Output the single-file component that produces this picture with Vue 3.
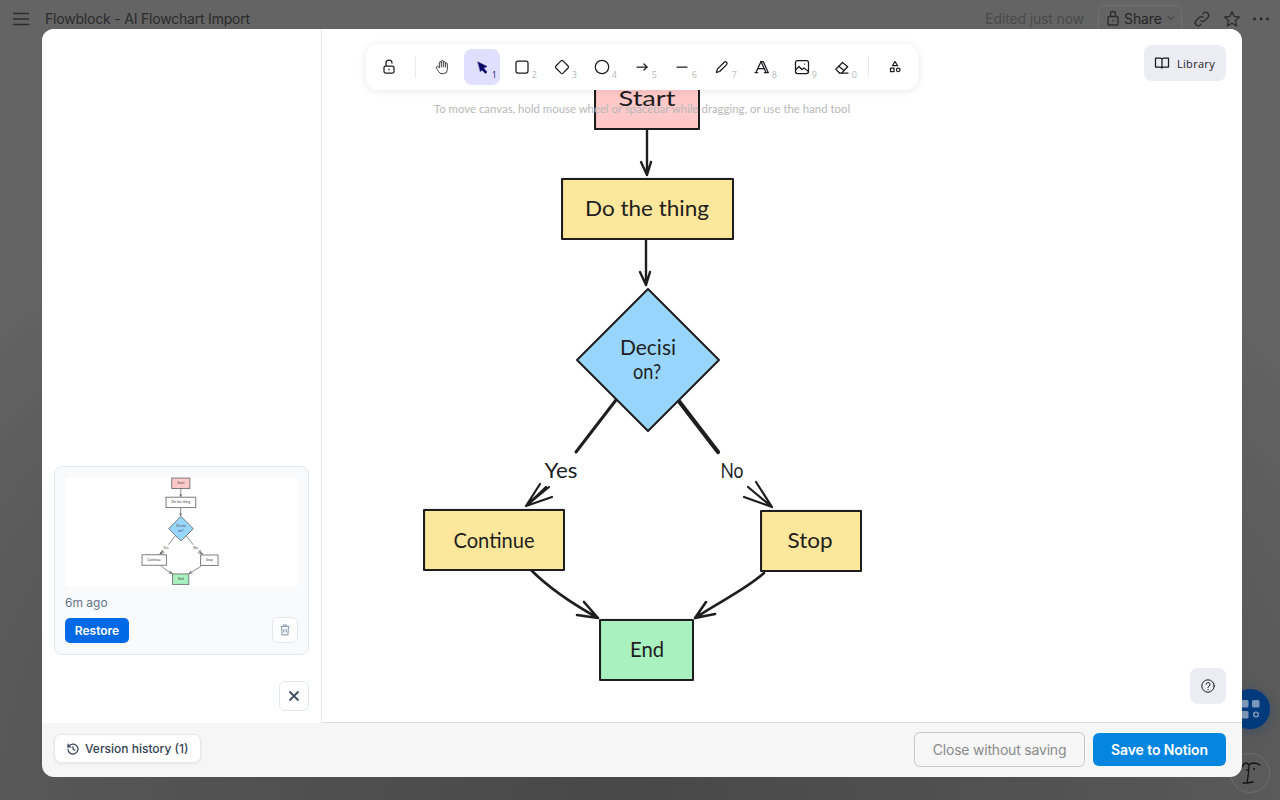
<script setup>
const tools = [
  { id: 'hand', view: 24, size: 16, width: 1.9, paths: ['M8 13V5.5a1.5 1.5 0 0 1 3 0V12', 'M11 5.5v-2a1.5 1.5 0 1 1 3 0V12', 'M14 5.5a1.5 1.5 0 0 1 3 0V12', 'M17 7.5a1.5 1.5 0 0 1 3 0V16a6 6 0 0 1-6 6h-2 .208a6 6 0 0 1-5.012-2.7l-.196-.3c-.312-.479-1.407-2.388-3.286-5.728a1.5 1.5 0 0 1 .536-2.022 1.867 1.867 0 0 1 2.28.28L8 13'] },
  { id: 'select', key: '1', active: true, fill: true, paths: ['M6 5l9 4.5-3.5 1.5 3.5 4-1.5 1.5-3.5-3.5-1.5 1.5Z'] },
  { id: 'rect', key: '2', paths: ['M6 4h8a2 2 0 0 1 2 2v8a2 2 0 0 1-2 2H6a2 2 0 0 1-2-2V6a2 2 0 0 1 2-2Z'] },
  { id: 'diamond', key: '3', paths: ['M9 3.9a1.5 1.5 0 0 1 2 0l5.1 5.1a1.5 1.5 0 0 1 0 2L11 16.1a1.5 1.5 0 0 1-2 0L3.9 11a1.5 1.5 0 0 1 0-2Z'] },
  { id: 'ellipse', key: '4', paths: ['M16.7 10a6.7 6.7 0 1 1-13.4 0 6.7 6.7 0 0 1 13.4 0Z'] },
  { id: 'arrow', key: '5', paths: ['M5 10h10', 'M12 7l3 3-3 3'] },
  { id: 'line', key: '6', width: 1.6, paths: ['M5 10h10'] },
  { id: 'pencil', key: '7', paths: ['M4.5 15.5l.8-3.4 6.9-6.9a1.7 1.7 0 0 1 2.4 2.4l-6.9 6.9Z'] },
  { id: 'text', key: '8', paths: ['M4 15.5 9 4.5l5 11', 'M6.2 11.5h5.6', 'M3 15.5h2.6', 'M12.4 15.5H16', 'M9 4.5h2.2l5 11'] },
  { id: 'image', key: '9', width: 1.5, paths: ['M5.5 3.5h9a2 2 0 0 1 2 2v9a2 2 0 0 1-2 2h-9a2 2 0 0 1-2-2v-9a2 2 0 0 1 2-2Z', 'M3.5 13l3.5-3.5 3 3 2-1.5 4.5 3.5', 'M12.5 7h.01'] },
  { id: 'eraser', key: '0', paths: ['M7.5 16H16', 'M7.5 16 3.8 12.3 10.5 5.5l5.2 4.2-6 6.3', 'M6.8 9.2l5.2 4.2'] }
]

const nodes = [
  { id: 'start', x: 595, y: 69, w: 104, h: 60, fill: '#ffc9c9', thumb: '#ffc9c9', lines: [{ t: 'Start', x: 647, y: 106, w: 57 }] },
  { id: 'do', x: 562, y: 179, w: 171, h: 60, fill: '#fde79c', thumb: '#ffffff', lines: [{ t: 'Do the thing', x: 647, y: 216, w: 124 }] },
  { id: 'continue', x: 424, y: 510, w: 140, h: 60, fill: '#fde79c', thumb: '#ffffff', lines: [{ t: 'Continue', x: 494, y: 548, w: 81 }] },
  { id: 'stop', x: 761, y: 511, w: 100, h: 60, fill: '#fde79c', thumb: '#ffffff', lines: [{ t: 'Stop', x: 810, y: 548, w: 45 }] },
  { id: 'end', x: 600, y: 620, w: 93, h: 60, fill: '#a9f1bf', thumb: '#a9f1bf', lines: [{ t: 'End', x: 647, y: 657, w: 34 }] }
]

const diamondText = [
  { t: 'Decisi', x: 648, y: 355, w: 56 },
  { t: 'on?', x: 647, y: 379, w: 28 }
]

const labels = [
  { t: 'Yes', x: 561, y: 478, w: 33 },
  { t: 'No', x: 732, y: 478, w: 23 }
]

const edges = [
  { d: 'M647 130V175M641 162L647 175L651 162', w: 2.4 },
  { d: 'M646 240V285M640 272L646 285L650 272', w: 2.4 },
  { d: 'M616 400L576 452', w: 3 },
  { d: 'M678 400L718 452', w: 4.2 },
  { d: 'M526 506L540 484M526 506L546 487M526 506L549 487M526 506L552 497', w: 2.2 },
  { d: 'M772 507L756 482M772 507L748 487M772 507L744 497', w: 2.2 },
  { d: 'M531 570C543 582 560 597 598 618M584 602L598 618L577 615', w: 2.6 },
  { d: 'M764 573C745 590 722 600 695 618M706 602L695 618L715 614', w: 2.6 }
]
</script>

<template>
  <div class="page">
    <header class="topbar">
      <svg class="menu" width="18" height="14" viewBox="0 0 18 14"><path d="M1 1.5h16M1 7h16M1 12.5h16" /></svg>
      <span class="doc-title">Flowblock - AI Flowchart Import</span>
      <span class="edited">Edited just now</span>
      <div class="share">
        <svg width="14" height="16" viewBox="0 0 14 16"><path d="M3 6.5h8a1 1 0 0 1 1 1V14a1 1 0 0 1-1 1H3a1 1 0 0 1-1-1V7.5a1 1 0 0 1 1-1ZM4.5 6.5V4a2.5 2.5 0 0 1 5 0v2.5M7 10v1.5" /></svg>
        <span>Share</span>
        <svg width="8" height="6" viewBox="0 0 8 6"><path d="M1 1.5l3 3 3-3" /></svg>
      </div>
      <svg class="top-icon link" width="18" height="18" viewBox="0 0 18 18"><path d="M7.5 10.5a3 3 0 0 0 4.3 0l3-3a3 3 0 0 0-4.3-4.3l-1 1M10.5 7.5a3 3 0 0 0-4.3 0l-3 3a3 3 0 0 0 4.3 4.3l1-1" /></svg>
      <svg class="top-icon star" width="18" height="18" viewBox="0 0 18 18"><path d="M9 1.8l2.2 4.7 5.1.6-3.8 3.5 1 5.1L9 13.2l-4.5 2.5 1-5.1-3.8-3.5 5.1-.6Z" /></svg>
      <svg class="dots" width="18" height="4" viewBox="0 0 18 4"><circle cx="2.5" cy="2" r="1.4" /><circle cx="9" cy="2" r="1.4" /><circle cx="15.5" cy="2" r="1.4" /></svg>
    </header>

    <div class="fab fab-blue">
      <svg width="40" height="40" viewBox="0 0 40 40">
        <rect x="11" y="11" width="7.5" height="7.5" rx="1.5" />
        <rect x="22" y="11" width="7.5" height="7.5" rx="1.5" />
        <rect x="11" y="22" width="7.5" height="7.5" rx="1.5" />
        <circle cx="26" cy="25.5" r="3.7" />
        <path d="M26 23.5v4M24 25.5h4" />
      </svg>
    </div>
    <div class="fab fab-face">
      <svg width="40" height="40" viewBox="0 0 40 40">
        <path d="M12 14c1-2 2.5-4 4-4s2.500 1 3 2c1-1.500 3-2 5-2s4.500 1 6 2M19 12c0 6-1 12-2 18h-4M17 30l6-1" />
        <circle cx="17" cy="17" r="0.9" />
        <circle cx="24" cy="16" r="0.9" />
      </svg>
    </div>

    <section class="modal">
      <div class="modal-main">
        <aside class="sidebar">
          <article class="version-card">
            <div class="thumb">
              <svg class="thumb-svg" viewBox="-18.5 63 1339 632">
                <path v-for="e in edges" :key="e.d" :d="e.d" class="t-edge" />
                <g v-for="n in nodes" :key="n.id">
                  <rect :x="n.x" :y="n.y" :width="n.w" :height="n.h" :fill="n.thumb" class="t-shape" />
                  <text v-for="l in n.lines" :key="l.t" :x="l.x" :y="l.y - 2" class="t-text">{{ l.t }}</text>
                </g>
                <path d="M648 289L719 360L648 431L577 360Z" fill="#99d6ff" class="t-shape" />
                <text v-for="l in diamondText" :key="l.t" :x="l.x" :y="l.y - 2" class="t-text">{{ l.t }}</text>
                <text v-for="l in labels" :key="l.t" :x="l.x" :y="l.y - 2" class="t-text">{{ l.t }}</text>
              </svg>
            </div>
            <div class="age">6m ago</div>
            <div class="card-actions">
              <button class="restore">Restore</button>
              <button class="trash" aria-label="Delete">
                <svg width="14" height="14" viewBox="0 0 14 14"><path d="M2.5 3.5h9M5.5 3.5V2.2h3v1.3M3.5 3.5l.6 8.3h5.8l.6-8.3M5.8 6v3.5M8.2 6v3.5" /></svg>
              </button>
            </div>
          </article>
          <button class="close-side" aria-label="Close">
            <svg width="12" height="12" viewBox="0 0 12 12"><path d="M1.5 1.5l9 9M10.5 1.5l-9 9" /></svg>
          </button>
        </aside>

        <main class="canvas">
          <svg class="diagram" viewBox="322 29 919 692">
            <path v-for="e in edges" :key="e.d" :d="e.d" :stroke-width="e.w" class="edge" />
            <g v-for="n in nodes" :key="n.id">
              <rect :x="n.x" :y="n.y" :width="n.w" :height="n.h" :fill="n.fill" class="shape" />
              <rect :x="n.x + 0.7" :y="n.y - 0.7" :width="n.w - 1" :height="n.h + 1" class="shape-ghost" />
              <text v-for="l in n.lines" :key="l.t" :x="l.x" :y="l.y" :textLength="l.w" lengthAdjust="spacingAndGlyphs" class="hand">{{ l.t }}</text>
            </g>
            <path d="M648 289L719 360L648 431L577 360Z" fill="#99d6ff" class="shape" />
            <text v-for="l in diamondText" :key="l.t" :x="l.x" :y="l.y" :textLength="l.w" lengthAdjust="spacingAndGlyphs" class="hand">{{ l.t }}</text>
            <text v-for="l in labels" :key="l.t" :x="l.x" :y="l.y" :textLength="l.w" lengthAdjust="spacingAndGlyphs" class="hand">{{ l.t }}</text>
          </svg>

          <div class="tool-stack">
            <nav class="toolbar">
              <button class="tool">
                <svg width="20" height="20" viewBox="0 0 20 20" class="ico"><path d="M6.5 9h7A1.5 1.5 0 0 1 15 10.5v4a1.5 1.5 0 0 1-1.5 1.5h-7A1.5 1.5 0 0 1 5 14.5v-4A1.5 1.5 0 0 1 6.5 9ZM7 9V6a3 3 0 0 1 6 0M10 12.2v.6" /></svg>
              </button>
              <span class="tool-sep"></span>
              <div class="tool-group">
                <button v-for="t in tools" :key="t.id" class="tool" :class="{ active: t.active }">
                  <svg :width="t.size || 20" :height="t.size || 20" :viewBox="`0 0 ${t.view || 20} ${t.view || 20}`" class="ico" :class="{ filled: t.fill }" :stroke-width="t.width || 1.25">
                    <path v-for="p in t.paths" :key="p" :d="p" />
                  </svg>
                  <span v-if="t.key" class="key">{{ t.key }}</span>
                </button>
              </div>
              <span class="tool-sep"></span>
              <button class="tool">
                <svg width="20" height="20" viewBox="0 0 20 20" class="ico"><path d="M10 4.5l2.5 4h-5ZM5.5 11H9v3.5H5.5ZM15 12.8a1.8 1.8 0 1 1-3.6 0 1.8 1.8 0 0 1 3.6 0Z" /></svg>
              </button>
            </nav>
            <p class="hint">To move canvas, hold mouse wheel or spacebar while dragging, or use the hand tool</p>
          </div>

          <button class="library">
            <svg width="16" height="16" viewBox="0 0 16 16" class="ico"><path d="M1.5 3h4.700c.8 0 1.800.5 1.800 1.500V13c0-.8-1-1-1.800-1H1.500ZM14.500 3H9.800C9 3 8 3.500 8 4.500V13c0-.8 1-1 1.800-1h4.700Z" /></svg>
            <span>Library</span>
          </button>
          <button class="help" aria-label="Help">
            <svg width="16" height="16" viewBox="0 0 16 16" class="ico thin"><circle cx="8" cy="8" r="6.2" /><path d="M6.2 6.3a1.900 1.900 0 1 1 2.800 1.700c-.7.4-1 .8-1 1.500M8 11.300v.2" /></svg>
          </button>
        </main>
      </div>

      <footer class="modal-footer">
        <button class="history">
          <svg width="14" height="14" viewBox="0 0 14 14"><path d="M2 7a5 5 0 1 0 1.500-3.500L2 5M2 2v3h3M7 4.500V7l1.800 1.300" /></svg>
          <span>Version history (1)</span>
        </button>
        <div class="footer-actions">
          <button class="ghost">Close without saving</button>
          <button class="primary">Save to Notion</button>
        </div>
      </footer>
    </section>
  </div>
</template>

<style scoped>
.page {
  position: relative;
  width: 1280px;
  height: 800px;
  overflow: hidden;
  background: radial-gradient(ellipse 900px 700px at 620px 800px, #484848 0%, #555555 60%, #646464 100%);
  font-family: Inter, "Liberation Sans", sans-serif;
}
button {
  font-family: inherit;
  cursor: pointer;
  padding: 0;
}
.topbar {
  display: flex;
  align-items: flex-start;
  height: 45px;
  padding: 5px 10px 0 12px;
  box-sizing: border-box;
  color: #2c2c2c;
}
.topbar svg {
  fill: none;
  stroke: #2c2c2c;
  stroke-width: 1.3;
}
.menu {
  margin-top: 7px;
  stroke: #333333;
}
.doc-title {
  margin-left: 15px;
  margin-top: 5px;
  font-size: 14px;
  line-height: 18px;
  letter-spacing: -0.2px;
  color: #2b2b2b;
}
.edited {
  margin-left: auto;
  margin-top: 5px;
  font-size: 14px;
  line-height: 18px;
  letter-spacing: -0.15px;
  color: #4a4a4a;
}
.share {
  display: flex;
  align-items: center;
  gap: 4px;
  width: 84px;
  height: 30px;
  margin-left: 14px;
  padding: 0 0 4px 7px;
  box-sizing: border-box;
  border: 1px solid #707070;
  border-radius: 6px;
  font-size: 14px;
  font-weight: 400;
  letter-spacing: -0.1px;
  color: #262626;
}
.share svg:last-child {
  stroke: #4a4a4a;
  margin-left: 1px;
}
.top-icon {
  margin-top: 5px;
}
.link {
  margin-left: 11px;
}
.star {
  margin-left: 12px;
}
.dots {
  margin: 12px 0 0 11px;
}
.topbar .dots {
  fill: #262626;
  stroke: none;
}
.fab {
  position: absolute;
  left: 1230px;
  width: 40px;
  height: 40px;
  border-radius: 50%;
}
.fab-blue {
  top: 689px;
  background: #003a7d;
  box-shadow: 0 2px 12px rgba(0, 58, 125, 0.35);
}
.fab-blue rect {
  fill: #7c96b6;
}
.fab-blue circle {
  fill: #7c96b6;
  stroke: #003a7d;
  stroke-width: 1.2;
}
.fab-blue path {
  stroke: #003a7d;
  stroke-width: 1.2;
}
.fab-face {
  top: 753px;
  border: 1px solid #6e6e6e;
  box-sizing: border-box;
  background: #5a5a5a;
}
.fab-face svg {
  margin: -1px;
}
.fab-face path {
  fill: none;
  stroke: #141414;
  stroke-width: 1.3;
  stroke-linecap: round;
  stroke-linejoin: round;
}
.fab-face circle {
  fill: #141414;
}
.modal {
  position: absolute;
  left: 42px;
  top: 29px;
  display: flex;
  flex-direction: column;
  width: 1200px;
  height: 748px;
  overflow: hidden;
  border-radius: 12px;
  background: #f6f6f6;
}
.modal-main {
  display: flex;
  height: 694px;
}
.sidebar {
  display: flex;
  flex-direction: column;
  align-items: flex-end;
  justify-content: flex-end;
  width: 280px;
  padding: 0 12px 12px;
  box-sizing: border-box;
  background: #ffffff;
  border-right: 1px solid #e2e8f0;
}
.version-card {
  width: 255px;
  height: 189px;
  padding: 10px;
  box-sizing: border-box;
  background: #f8fafc;
  border: 1px solid #e2e8f0;
  border-radius: 8px;
}
.thumb {
  width: 233px;
  height: 110px;
  background: #ffffff;
  border-radius: 4px;
}
.thumb-svg {
  display: block;
  width: 233px;
  height: 110px;
}
.t-edge {
  fill: none;
  stroke: #555555;
  stroke-width: 4;
}
.t-shape {
  stroke: #6a6a6a;
  stroke-width: 5;
}
.t-text {
  font-family: Lato, sans-serif;
  font-size: 20px;
  text-anchor: middle;
  fill: #444444;
}
.age {
  margin-top: 8px;
  font-size: 12px;
  line-height: 15px;
  color: #64748b;
}
.card-actions {
  display: flex;
  align-items: center;
  justify-content: space-between;
  margin-top: 7px;
}
.restore {
  width: 64px;
  height: 25px;
  background: #0069e6;
  border: none;
  border-radius: 5px;
  color: #ffffff;
  font-size: 12px;
  font-weight: 600;
}
.trash {
  display: flex;
  align-items: center;
  justify-content: center;
  width: 26px;
  height: 26px;
  background: #ffffff;
  border: 1px solid #e2e8f0;
  border-radius: 6px;
}
.trash svg {
  fill: none;
  stroke: #94a3b8;
  stroke-width: 1.2;
}
.close-side {
  display: flex;
  align-items: center;
  justify-content: center;
  width: 30px;
  height: 30px;
  margin-top: 26px;
  background: #ffffff;
  border: 1px solid #e2e8f0;
  border-radius: 6px;
}
.close-side svg {
  fill: none;
  stroke: #475569;
  stroke-width: 2;
}
.canvas {
  position: relative;
  flex: 1;
  height: 693px;
  background: #ffffff;
  border-bottom: 1px solid #dddddd;
  overflow: hidden;
}
.diagram {
  position: absolute;
  inset: 0;
  width: 919px;
  height: 692px;
}
.edge {
  fill: none;
  stroke: #1e1e1e;
  stroke-linecap: round;
  stroke-linejoin: round;
}
.shape {
  stroke: #1e1e1e;
  stroke-width: 2;
  stroke-linejoin: round;
}
.shape-ghost {
  fill: none;
  stroke: #1e1e1e;
  stroke-width: 1;
  opacity: 0.35;
}
.hand {
  font-family: Lato, sans-serif;
  font-size: 21px;
  text-anchor: middle;
  fill: #1e1e1e;
}
.tool-stack {
  position: absolute;
  left: 44px;
  top: 15px;
  display: flex;
  flex-direction: column;
  align-items: center;
  width: 552px;
}
.toolbar {
  display: flex;
  align-items: center;
  width: 552px;
  height: 46px;
  padding: 0 5px;
  box-sizing: border-box;
  background: #ffffff;
  border-radius: 12px;
  box-shadow: 0 1px 8px rgba(0, 0, 0, 0.09);
}
.tool-group {
  display: flex;
  gap: 4px;
}
.tool-sep {
  width: 1px;
  height: 22px;
  margin: 0 8px;
  background: #e9ecef;
}
.tool {
  position: relative;
  display: flex;
  align-items: center;
  justify-content: center;
  width: 36px;
  height: 36px;
  background: transparent;
  border: none;
  border-radius: 8px;
}
.tool.active {
  background: #e0dfff;
}
.ico {
  fill: none;
  stroke: #1b1b1f;
  stroke-width: 1.25;
  stroke-linecap: round;
  stroke-linejoin: round;
}
.ico.filled {
  fill: #030064;
  stroke: #030064;
  stroke-width: 0.5;
}
.ico.thin {
  stroke-width: 1;
}
.key {
  position: absolute;
  right: 3px;
  bottom: 5px;
  font-family: "Open Sans", sans-serif;
  font-size: 9px;
  line-height: 11px;
  color: #b8b8b8;
}
.tool.active .key {
  color: #1e1b70;
}
.hint {
  margin: 11px 0 0;
  font-family: Lato, sans-serif;
  font-size: 11.4px;
  line-height: 16px;
  color: #b8b8b8;
  white-space: nowrap;
}
.library {
  position: absolute;
  top: 16px;
  right: 16px;
  display: flex;
  align-items: center;
  gap: 7px;
  width: 82px;
  height: 36px;
  padding-left: 10px;
  box-sizing: border-box;
  background: #ececf4;
  border: none;
  border-radius: 8px;
  font-family: "Open Sans", sans-serif;
  font-size: 11px;
  letter-spacing: 0.3px;
  color: #1b1b1f;
}
.help {
  position: absolute;
  right: 16px;
  bottom: 18px;
  display: flex;
  align-items: center;
  justify-content: center;
  width: 36px;
  height: 36px;
  background: #ececf4;
  border: none;
  border-radius: 8px;
}
.modal-footer {
  display: flex;
  align-items: center;
  justify-content: space-between;
  flex: 1;
  padding: 0 16px 0 12px;
}
.history {
  display: flex;
  align-items: center;
  gap: 5px;
  width: 147px;
  height: 29px;
  margin-bottom: 3px;
  padding-left: 11px;
  box-sizing: border-box;
  background: #ffffff;
  border: 1px solid #e2e8f0;
  border-radius: 7px;
  box-shadow: 0 1px 3px rgba(0, 0, 0, 0.07);
  font-size: 12px;
  font-weight: 500;
  color: #334155;
}
.history svg {
  fill: none;
  stroke: #334155;
  stroke-width: 1.2;
  stroke-linecap: round;
  stroke-linejoin: round;
}
.footer-actions {
  display: flex;
  align-items: center;
  gap: 8px;
  margin-bottom: 1px;
}
.ghost {
  width: 171px;
  height: 35px;
  background: #f6f6f6;
  border: 1px solid #c8c8c8;
  border-radius: 6px;
  font-size: 14px;
  letter-spacing: -0.2px;
  color: #8a8a8a;
}
.primary {
  width: 133px;
  height: 33px;
  background: #0385e0;
  border: none;
  border-radius: 6px;
  font-size: 14px;
  font-weight: 600;
  letter-spacing: -0.1px;
  color: #ffffff;
}
</style>
